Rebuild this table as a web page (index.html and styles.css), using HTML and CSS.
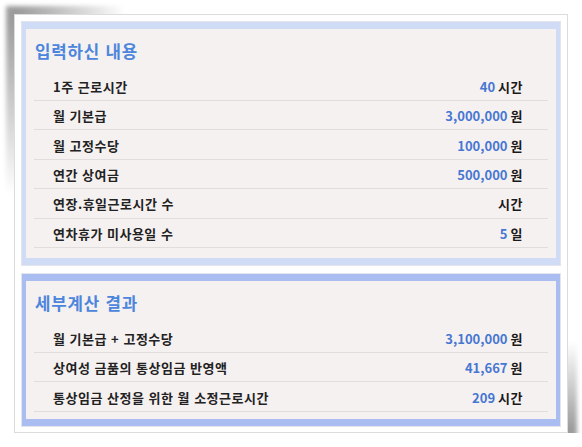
FILE: index.html
```html
<!DOCTYPE html>
<html lang="ko">
<head>
<meta charset="utf-8">
<title>통상임금 계산 결과</title>
<link rel="stylesheet" href="styles.css">
</head>
<body>
<div class="frame">
  <section class="panel panel--input">
    <div class="panel-body">
      <h2 class="panel-title">입력하신 내용</h2>
      <ul class="rows">
        <li class="row"><span class="label">1주 근로시간</span><span class="value"><b class="num">40</b><span class="unit">시간</span></span></li>
        <li class="row"><span class="label">월 기본급</span><span class="value"><b class="num">3,000,000</b><span class="unit">원</span></span></li>
        <li class="row"><span class="label">월 고정수당</span><span class="value"><b class="num">100,000</b><span class="unit">원</span></span></li>
        <li class="row"><span class="label">연간 상여금</span><span class="value"><b class="num">500,000</b><span class="unit">원</span></span></li>
        <li class="row"><span class="label">연장.휴일근로시간 수</span><span class="value"><span class="unit">시간</span></span></li>
        <li class="row"><span class="label">연차휴가 미사용일 수</span><span class="value"><b class="num">5</b><span class="unit">일</span></span></li>
      </ul>
    </div>
  </section>
  <section class="panel panel--result">
    <div class="panel-body">
      <h2 class="panel-title">세부계산 결과</h2>
      <ul class="rows">
        <li class="row"><span class="label">월 기본급 + 고정수당</span><span class="value"><b class="num">3,100,000</b><span class="unit">원</span></span></li>
        <li class="row"><span class="label">상여성 금품의 통상임금 반영액</span><span class="value"><b class="num">41,667</b><span class="unit">원</span></span></li>
        <li class="row"><span class="label">통상임금 산정을 위한 월 소정근로시간</span><span class="value"><b class="num">209</b><span class="unit">시간</span></span></li>
      </ul>
    </div>
  </section>
</div>
</body>
</html>
```

FILE: styles.css
```css
html {
  background: #ffffff;
}

body {
  margin: 0;
  padding: 0;
  font-family: "Noto Sans CJK KR", "Noto Sans", sans-serif;
  color: #222222;
}

.frame {
  position: relative;
  box-sizing: border-box;
  width: 554px;
  height: 419px;
  margin: 14px 0 0 14px;
  padding: 6px;
  border: 1px solid #dcdcdc;
  background: #ffffff;
}

.frame::before,
.frame::after {
  content: "";
  position: absolute;
  z-index: -1;
  pointer-events: none;
}

.frame::before {
  left: -9px;
  top: -9px;
  width: 150px;
  height: 220px;
  background: radial-gradient(ellipse 110px 180px at 9px 9px, rgba(0, 0, 0, 0.4), rgba(0, 0, 0, 0) 100%);
  filter: blur(2px);
}

.frame::after {
  right: -10px;
  bottom: -10px;
  width: 200px;
  height: 120px;
  background: radial-gradient(ellipse 170px 90px at 190px 110px, rgba(0, 0, 0, 0.4), rgba(0, 0, 0, 0) 100%);
  filter: blur(2px);
}

.panel {
  border: 1px solid #e4e4ec;
  padding: 7px 4px;
  background: #d0dbf5;
}

.panel + .panel {
  margin-top: 7px;
}

.panel--result {
  background: #a9bdf0;
}

.panel-body {
  background: #f6f1f1;
  padding: 0 8px 10px;
}

.panel--result .panel-body {
  padding-bottom: 7px;
}

.panel-title {
  box-sizing: border-box;
  height: 42.6px;
  margin: 0;
  padding: 11px 0 0 1px;
  font-size: 16.8px;
  line-height: 22px;
  font-weight: 700;
  letter-spacing: 0.8px;
  color: #4c86dc;
}

.rows {
  list-style: none;
  margin: 0;
  padding: 0;
}

.row {
  box-sizing: border-box;
  height: 29.4px;
  display: flex;
  align-items: center;
  justify-content: space-between;
  padding: 1px 25px 0 19px;
  border-bottom: 1px solid #e2dddd;
  font-size: 13px;
  font-weight: 700;
}

.label {
  color: #222222;
  letter-spacing: 0.5px;
}

.value {
  display: flex;
  align-items: baseline;
}

.num {
  font-weight: 700;
  color: #4677d2;
  margin-right: 3px;
}

.unit {
  color: #1a1a1a;
  letter-spacing: 0.5px;
}
```
